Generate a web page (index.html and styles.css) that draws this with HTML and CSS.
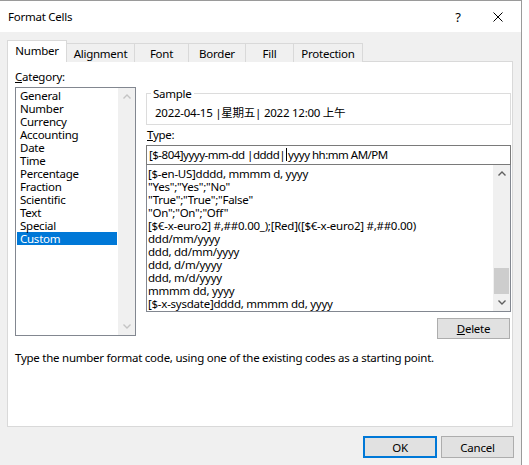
FILE: index.html
```html
<!DOCTYPE html>
<html lang="en">
<head>
    <meta charset="UTF-8">
    <title>Format Cells</title>
    <link rel="stylesheet" href="styles.css">
</head>
<body>
    <div class="dialog">
        <div class="titlebar">
            <span class="title">Format Cells</span>
            <span class="caption-btn help">?</span>
            <span class="caption-btn close">
                <svg width="10" height="10" viewBox="0 0 10 10"><path d="M0.5 0.5L9.5 9.5M9.5 0.5L0.5 9.5" stroke="#000" stroke-width="1" fill="none"/></svg>
            </span>
        </div>

        <div class="tabs">
            <div class="tab active">Number</div>
            <div class="tab">Alignment</div>
            <div class="tab">Font</div>
            <div class="tab">Border</div>
            <div class="tab">Fill</div>
            <div class="tab">Protection</div>
        </div>

        <div class="panel">
            <div class="columns">
                <div class="category">
                    <div class="label"><u>C</u>ategory:</div>
                    <div class="listbox">
                        <ul class="items">
                            <li>General</li>
                            <li>Number</li>
                            <li>Currency</li>
                            <li>Accounting</li>
                            <li>Date</li>
                            <li>Time</li>
                            <li>Percentage</li>
                            <li>Fraction</li>
                            <li>Scientific</li>
                            <li>Text</li>
                            <li>Special</li>
                            <li class="selected">Custom</li>
                        </ul>
                        <div class="scrollbar disabled">
                            <div class="arrow"><svg width="8" height="5" viewBox="0 0 8 5"><path d="M0.5 4.5L4 1L7.5 4.5" /></svg></div>
                            <div class="track"></div>
                            <div class="arrow"><svg width="8" height="5" viewBox="0 0 8 5"><path d="M0.5 0.5L4 4L7.5 0.5" /></svg></div>
                        </div>
                    </div>
                </div>

                <div class="details">
                    <fieldset class="sample">
                        <legend>Sample</legend>
                        <div class="sample-value">2022-04-15 |星期五| 2022 12:00 上午</div>
                    </fieldset>

                    <div class="label type-label"><u>T</u>ype:</div>
                    <div class="type-input">[$-804]yyyy-mm-dd |dddd|<span class="caret"></span>yyyy hh:mm AM/PM</div>

                    <div class="format-list">
                        <ul class="items">
                            <li>[$-en-US]dddd, mmmm d, yyyy</li>
                            <li>"Yes";"Yes";"No"</li>
                            <li>"True";"True";"False"</li>
                            <li>"On";"On";"Off"</li>
                            <li>[$€-x-euro2] #,##0.00_);[Red]([$€-x-euro2] #,##0.00)</li>
                            <li>ddd/mm/yyyy</li>
                            <li>ddd, dd/mm/yyyy</li>
                            <li>ddd, d/m/yyyy</li>
                            <li>ddd, m/d/yyyy</li>
                            <li>mmmm dd, yyyy</li>
                            <li>[$-x-sysdate]dddd, mmmm dd, yyyy</li>
                        </ul>
                        <div class="scrollbar">
                            <div class="arrow"><svg width="8" height="5" viewBox="0 0 8 5"><path d="M0.5 4.5L4 1L7.5 4.5" /></svg></div>
                            <div class="track"><div class="thumb"></div></div>
                            <div class="arrow"><svg width="8" height="5" viewBox="0 0 8 5"><path d="M0.5 0.5L4 4L7.5 0.5" /></svg></div>
                        </div>
                    </div>

                    <div class="actions">
                        <button class="btn delete"><u>D</u>elete</button>
                    </div>
                </div>
            </div>

            <p class="hint">Type the number format code, using one of the existing codes as a starting point.</p>
        </div>

        <div class="footer">
            <button class="btn default">OK</button>
            <button class="btn">Cancel</button>
        </div>
    </div>
</body>
</html>
```

FILE: styles.css
```css
body {
    margin: 0;
    background: #fff;
    font-family: "Noto Sans", Arial, sans-serif;
    font-size: 11.5px;
    letter-spacing: -0.25px;
    color: #000;
}
ul {
    list-style: none;
    margin: 0;
    padding: 0;
}
.dialog {
    width: 522px;
    height: 465px;
    box-sizing: border-box;
    border-top: 1px solid #9a9a9a;
    border-right: 1px solid #9a9a9a;
    background: #f0f0f0;
}
.titlebar {
    height: 31px;
    background: #fff;
    display: flex;
    align-items: center;
}
.title {
    flex: 1;
    padding-left: 8px;
}
.caption-btn {
    width: 46px;
    height: 31px;
    display: flex;
    align-items: center;
    justify-content: center;
}
.caption-btn.help {
    width: 34px;
    font-size: 13px;
}
.tabs {
    display: flex;
    align-items: flex-end;
    height: 22px;
    margin-top: 8px;
    padding-left: 7px;
}
.tab {
    height: 19px;
    box-sizing: border-box;
    border: 1px solid #d9d9d9;
    border-bottom: none;
    margin-left: -1px;
    display: flex;
    align-items: center;
    justify-content: center;
    background: #f0f0f0;
}
.tab:first-child { margin-left: 0; width: 60px; }
.tab:nth-child(2) { width: 69px; }
.tab:nth-child(3) { width: 55px; }
.tab:nth-child(4) { width: 58px; }
.tab:nth-child(5) { width: 49px; }
.tab:nth-child(6) { width: 70px; }
.tab.active {
    height: 22px;
    background: #fff;
    position: relative;
    z-index: 1;
    padding-bottom: 2px;
}
.panel {
    margin: -1px 0 0 7px;
    width: 506px;
    height: 366px;
    box-sizing: border-box;
    border: 1px solid #d9d9d9;
    background: #fff;
    padding: 8px 0 0 7px;
}
.columns {
    display: flex;
    gap: 10px;
}
.label {
    line-height: 14px;
    margin-bottom: 3px;
}
.category {
    width: 121px;
}
.listbox {
    height: 249px;
    box-sizing: border-box;
    border: 1px solid #828790;
    display: flex;
}
.items {
    flex: 1;
    padding: 1px;
}
.items li {
    line-height: 13px;
    height: 13px;
    padding-left: 3px;
    white-space: nowrap;
}
.items li.selected {
    background: #0078d7;
    color: #fff;
}
.scrollbar {
    width: 17px;
    background: #f0f0f0;
    display: flex;
    flex-direction: column;
}
.scrollbar .arrow {
    height: 17px;
    display: flex;
    align-items: center;
    justify-content: center;
}
.scrollbar svg path {
    fill: none;
    stroke: #606060;
    stroke-width: 1.4;
}
.scrollbar.disabled svg path {
    stroke: #c4c4c4;
}
.scrollbar .track {
    flex: 1;
    display: flex;
    flex-direction: column;
    justify-content: flex-end;
}
.thumb {
    height: 26px;
    margin: 0 1px;
    background: #cdcdcd;
}
.details {
    width: 365px;
    margin-top: 17px;
}
.sample {
    margin: 0;
    padding: 0;
    border: 1px solid #dcdcdc;
}
.sample legend {
    margin-left: 4px;
    padding: 0 2px;
    line-height: 13px;
}
.sample-value {
    line-height: 13px;
    padding: 6px 0 5px 8px;
    font-family: "Noto Sans", "Noto Sans CJK SC", sans-serif;
}
.type-label {
    margin: 3px 0 3px 1px;
}
.type-input {
    height: 20px;
    box-sizing: border-box;
    border: 1px solid #7a7a7a;
    padding-left: 2px;
    line-height: 18px;
    letter-spacing: -0.5px;
    white-space: nowrap;
}
.caret {
    display: inline-block;
    width: 1px;
    height: 13px;
    margin: 0 1px 0 1px;
    background: #000;
    vertical-align: -2px;
}
.format-list {
    height: 147px;
    box-sizing: border-box;
    border: 1px solid #828790;
    border-top: none;
    display: flex;
}
.format-list .items {
    padding: 2px 0 0 1px;
}
.format-list .items li {
    padding-left: 0;
}
.actions {
    display: flex;
    justify-content: flex-end;
    margin-top: 6px;
    padding-right: 1px;
}
.btn {
    font-family: inherit;
    font-size: inherit;
    letter-spacing: inherit;
    color: #000;
    background: #e1e1e1;
    border: 1px solid #adadad;
    padding: 0;
    margin: 0;
    height: 22px;
    width: 73px;
}
.btn.delete {
    height: 21px;
}
.btn.default {
    width: 74px;
    border: 2px solid #0078d7;
}
.hint {
    margin: 12px 0 0;
    line-height: 14px;
}
.footer {
    display: flex;
    justify-content: flex-end;
    gap: 4px;
    margin-top: 9px;
    padding-right: 7px;
}
```
